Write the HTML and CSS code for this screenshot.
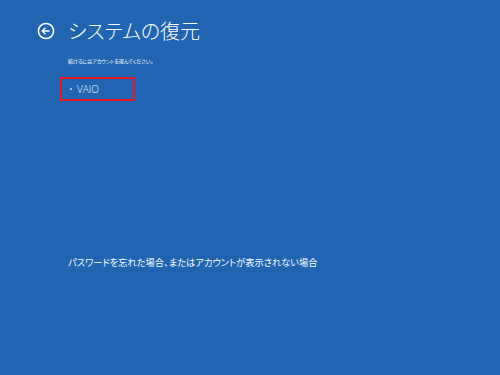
FILE: index.html
```html
<!DOCTYPE html>
<html lang="ja">
<head>
    <meta charset="UTF-8">
    <meta name="viewport" content="width=device-width, initial-scale=1.0">
    <title>システムの復元</title>
    <link rel="stylesheet" href="styles.css">
</head>
<body>
    <div class="screen">
        <div class="header">
            <svg class="back-icon" width="18" height="18" viewBox="0 0 18 18">
                <circle cx="9" cy="9" r="7.6" fill="none" stroke="#fff" stroke-width="1.5"/>
                <path d="M12.5 9H5.5M8.5 5.8L5.3 9l3.2 3.2" fill="none" stroke="#fff" stroke-width="1.5"/>
            </svg>
            <h1 class="title">システムの復元</h1>
        </div>
        <div class="content">
            <p class="hint">続けるにはアカウントを選んでください。</p>
            <div class="account-list">
                <div class="account selected">
                    <span class="bullet"></span>
                    <span class="name">VAIO</span>
                </div>
            </div>
            <div class="spacer"></div>
            <a class="forgot">パスワードを忘れた場合、またはアカウントが表示されない場合</a>
        </div>
    </div>
</body>
</html>
```

FILE: styles.css
```css
body {
    margin: 0;
    padding: 0;
    width: 500px;
    height: 375px;
    background-color: #2064b2;
    color: #fff;
    font-family: "Noto Sans CJK JP", "Noto Sans", sans-serif;
    font-feature-settings: "palt";
    overflow: hidden;
}

.screen {
    padding: 17px 0 0 37px;
}

.header {
    display: flex;
    align-items: center;
    gap: 13px;
}

.title {
    margin: 0;
    font-size: 20px;
    font-weight: 300;
    line-height: 28px;
}

.content {
    padding-left: 31px;
    display: flex;
    flex-direction: column;
}

.hint {
    margin: 11px 0 0;
    font-size: 5px;
    line-height: 10px;
}

.account-list {
    margin: 11px 0 0 -8px;
}

.account {
    display: flex;
    align-items: center;
    gap: 5px;
    width: 63px;
    height: 20px;
    padding-left: 8px;
    font-family: "Open Sans", sans-serif;
    font-weight: 300;
    font-size: 10px;
}

.account.selected {
    border: 2px solid #e8141e;
}

.bullet {
    width: 2px;
    height: 2px;
    border-radius: 50%;
    background-color: #cfe0f2;
}

.spacer {
    height: 154px;
}

.forgot {
    font-size: 9.25px;
    line-height: 14px;
}
```
